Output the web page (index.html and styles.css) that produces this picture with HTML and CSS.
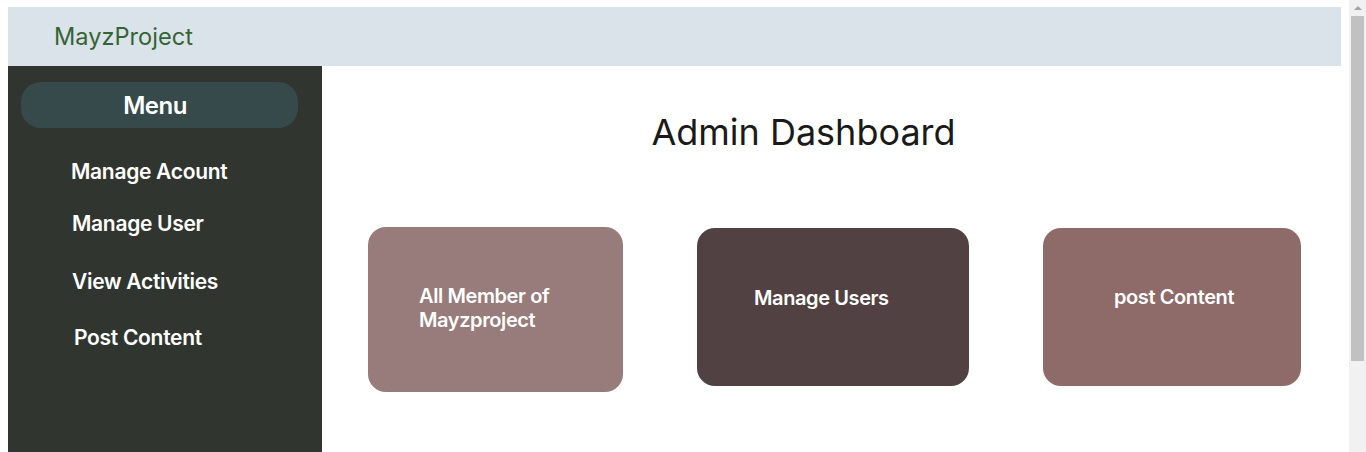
FILE: index.html
```html
<!DOCTYPE html>
<html lang="en">
<head>
<meta charset="utf-8">
<title>MayzProject Admin</title>
<link rel="stylesheet" href="styles.css">
</head>
<body>
<header class="topbar">
  <span class="brand">MayzProject</span>
</header>
<div class="layout">
  <aside class="sidebar">
    <div class="menu-title">Menu</div>
    <nav class="menu">
      <a class="menu-item item-1">Manage Acount</a>
      <a class="menu-item item-2">Manage User</a>
      <a class="menu-item item-3">View Activities</a>
      <a class="menu-item item-4">Post Content</a>
    </nav>
  </aside>
  <main class="main">
    <h1 class="title">Admin Dashboard</h1>
    <div class="cards">
      <div class="card card-members"><span>All Member of<br>Mayzproject</span></div>
      <div class="card card-users"><span>Manage Users</span></div>
      <div class="card card-post"><span>post Content</span></div>
    </div>
  </main>
</div>
<div class="scrollbar" aria-hidden="true">
  <div class="scroll-arrow"></div>
  <div class="scroll-thumb"></div>
</div>
</body>
</html>
```
FILE: styles.css
```css
html, body {
  margin: 0;
  padding: 0;
}
body {
  margin: 7px 25px 8px 8px;
  font-family: Inter, "Liberation Sans", sans-serif;
  background: #ffffff;
}
.topbar {
  height: 59px;
  background: #dbe3ea;
  display: flex;
  align-items: center;
  padding-left: 46px;
}
.brand {
  font-size: 23.6px;
  color: #356334;
  font-weight: 400;
}
.layout {
  display: flex;
  height: 479px;
}
.sidebar {
  width: 314px;
  flex-shrink: 0;
  background: #31352f;
  padding: 16px 24px 0 13px;
  box-sizing: border-box;
}
.menu-title {
  height: 46px;
  border-radius: 20px;
  background: #364a4c;
  color: #ffffff;
  font-size: 24px;
  font-weight: 600;
  letter-spacing: -0.5px;
  display: flex;
  align-items: center;
  justify-content: center;
  padding-right: 9px;
}
.menu {
  display: flex;
  flex-direction: column;
  padding-top: 32px;
}
.menu-item {
  color: #ffffff;
  font-size: 21px;
  font-weight: 600;
  letter-spacing: -0.3px;
  line-height: 24px;
}
.item-1 { margin-left: 50px; }
.item-2 { margin-left: 51px; margin-top: 28px; }
.item-3 { margin-left: 51px; margin-top: 34px; }
.item-4 { margin-left: 53px; margin-top: 32px; }
.main {
  flex: 1;
  padding: 0 0 0 46px;
}
.title {
  margin: 44px 0 0 0;
  padding-right: 102px;
  font-size: 36px;
  font-weight: 400;
  color: #1a1a1a;
  text-align: center;
  line-height: 44px;
}
.cards {
  display: flex;
  align-items: flex-start;
  margin-top: 73px;
}
.card {
  border-radius: 18px;
  color: #ffffff;
  font-size: 20px;
  font-weight: 600;
  letter-spacing: -0.4px;
  line-height: 24px;
  display: flex;
  align-items: center;
  box-sizing: border-box;
}
.card-members {
  width: 255px;
  height: 165px;
  background: #977c7b;
  padding-left: 51px;
  padding-bottom: 4px;
}
.card-users {
  width: 272px;
  height: 158px;
  margin-left: 74px;
  margin-top: 1px;
  background: #524142;
  padding-left: 57px;
  padding-bottom: 19px;
}
.card-post {
  width: 258px;
  height: 158px;
  margin-left: 74px;
  margin-top: 1px;
  background: #8e6a69;
  padding-left: 71px;
  padding-bottom: 21px;
}
.scrollbar {
  position: fixed;
  top: 0;
  right: 0;
  width: 17px;
  height: 100%;
  background: #f1f1f1;
}
.scroll-arrow {
  margin: 6px auto 0 auto;
  width: 0;
  height: 0;
  border-left: 4px solid transparent;
  border-right: 4px solid transparent;
  border-bottom: 4px solid #a3a3a3;
}
.scroll-thumb {
  margin: 6px 2px 0 2px;
  height: 345px;
  background: #c1c1c1;
}
```
